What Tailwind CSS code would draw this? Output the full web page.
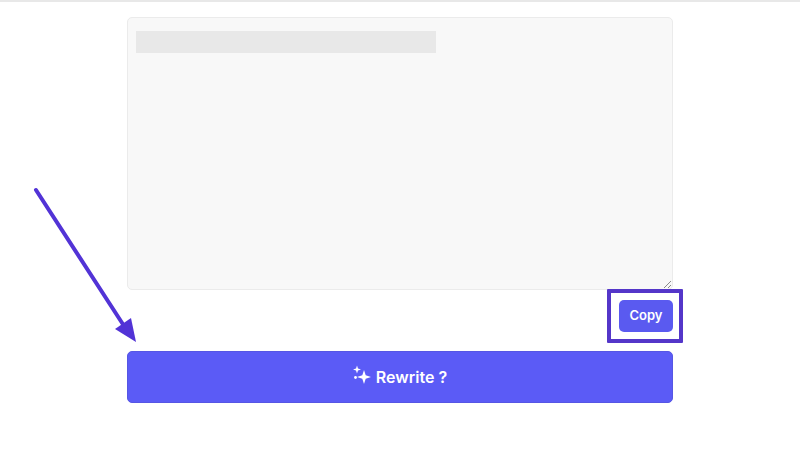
<!DOCTYPE html>
<html lang="en">
<head>
    <meta charset="UTF-8">
    <title>Rewrite</title>
    <script src="https://cdn.jsdelivr.net/npm/@tailwindcss/browser@4"></script>
</head>
<body class="bg-white font-['Inter',sans-serif]">
    <div class="relative w-[800px] h-[452px] overflow-hidden">
        <!-- Top rule -->
        <div class="h-[2px] bg-[#e8e8e8]"></div>

        <div class="w-[546px] ml-[127px] pt-[15px]">
            <!-- Output box -->
            <div class="relative h-[273px] bg-[#f8f8f8] border border-[#ebebeb] rounded-[5px] pt-[13px] pl-[8px]">
                <div class="w-[300px] h-[22px] bg-[#e8e8e8]"></div>
                <!-- Resize handle -->
                <svg class="absolute right-0 bottom-0" width="10" height="10" viewBox="0 0 10 10" fill="none" stroke="#8a8a8a" stroke-width="1">
                    <path d="M2 9L9 2M6 9L9 6"/>
                </svg>
            </div>

            <div class="flex justify-end mt-[10px]">
                <button class="w-[54px] h-[32px] bg-[#5a5af0] rounded-[5px] text-white text-[13px] font-semibold">Copy</button>
            </div>

            <button class="w-full h-[52px] mt-[19px] bg-[#5b5bf6] rounded-[5px] border border-[#5656e4] text-white text-[16px] font-semibold flex items-center justify-center gap-[4px] pb-[1px] pr-[1px]">
                <svg width="20" height="20" viewBox="0 0 20 20" fill="#ffffff" class="mb-[4px]">
                    <path d="M12 5L13.7 10.3L19 12L13.7 13.7L12 19L10.3 13.7L5 12L10.3 10.3Z"/>
                    <path d="M5 0.5L6 3.5L9 4.5L6 5.5L5 8.5L4 5.5L1 4.5L4 3.5Z"/>
                    <circle cx="3.5" cy="12.5" r="1.4"/>
                </svg>
                <span>Rewrite ?</span>
            </button>
        </div>

        <!-- Highlight around Copy -->
        <div class="absolute left-[607px] top-[289px] w-[76px] h-[54px] border-[4px] border-[#5436c9] rounded-[1px]"></div>

        <!-- Annotation arrow -->
        <svg class="absolute left-0 top-0" width="800" height="452" viewBox="0 0 800 452" fill="none">
            <path d="M36 190L126 329" stroke="#5233d6" stroke-width="4" stroke-linecap="round"/>
            <path d="M136 342L115 329L131 318Z" fill="#5233d6"/>
        </svg>
    </div>
</body>
</html>
